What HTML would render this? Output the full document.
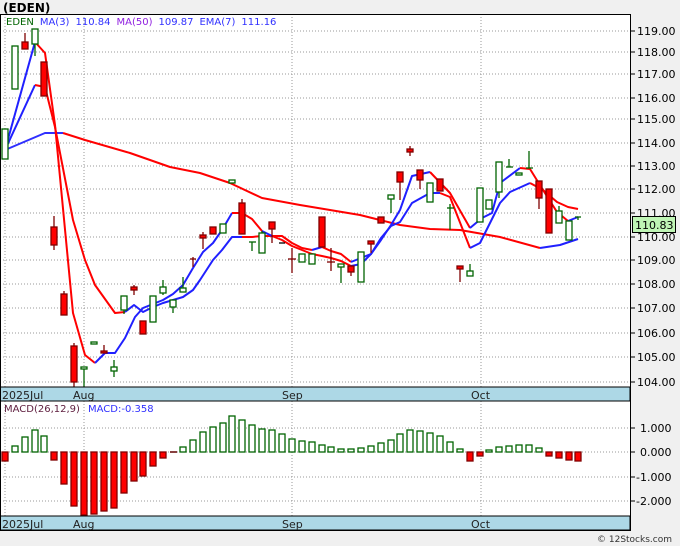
<!DOCTYPE html>
<html><head><meta charset="utf-8"><style>
body{margin:0;background:#f0f0f0;width:680px;height:546px;overflow:hidden;font-family:"DejaVu Sans","Liberation Sans",sans-serif}
svg{position:absolute;left:0;top:0}
</style></head><body>
<svg width="680" height="546" viewBox="0 0 680 546" font-family="DejaVu Sans, Liberation Sans, sans-serif">
<rect x="0" y="0" width="680" height="546" fill="#f0f0f0"/>
<rect x="0" y="14" width="630" height="516" fill="#fff"/>
<text x="3" y="12" font-size="12" font-weight="bold" fill="#000">(EDEN)</text>
<g stroke="#999" stroke-dasharray="1,2" stroke-width="1">
<line x1="0" x2="630" y1="31" y2="31"/><line x1="0" x2="630" y1="52" y2="52"/><line x1="0" x2="630" y1="74" y2="74"/><line x1="0" x2="630" y1="98" y2="98"/><line x1="0" x2="630" y1="119" y2="119"/><line x1="0" x2="630" y1="143" y2="143"/><line x1="0" x2="630" y1="166" y2="166"/><line x1="0" x2="630" y1="189" y2="189"/><line x1="0" x2="630" y1="213" y2="213"/><line x1="0" x2="630" y1="237" y2="237"/><line x1="0" x2="630" y1="260" y2="260"/><line x1="0" x2="630" y1="284" y2="284"/><line x1="0" x2="630" y1="308" y2="308"/><line x1="0" x2="630" y1="333" y2="333"/><line x1="0" x2="630" y1="357" y2="357"/><line x1="0" x2="630" y1="382" y2="382"/>
<line x1="0" x2="630" y1="428" y2="428"/><line x1="0" x2="630" y1="452" y2="452"/><line x1="0" x2="630" y1="477" y2="477"/><line x1="0" x2="630" y1="501" y2="501"/>
<line x1="5" x2="5" y1="14" y2="516"/><line x1="84" x2="84" y1="14" y2="516"/><line x1="292" x2="292" y1="14" y2="516"/><line x1="481" x2="481" y1="14" y2="516"/>
</g>
<text x="6" y="25" font-size="10"><tspan fill="#006400">EDEN</tspan><tspan fill="#3030ff" dx="6">MA(3)</tspan><tspan fill="#3030ff" dx="6">110.84</tspan><tspan fill="#9020e0" dx="6">MA(50)</tspan><tspan fill="#3030ff" dx="6">109.87</tspan><tspan fill="#3030ff" dx="6">EMA(7)</tspan><tspan fill="#3030ff" dx="6">111.16</tspan></text>
<g fill="none" stroke-width="2" stroke-linejoin="round">
<polyline stroke="#3030ff" points="5,150 45,133 63,133"/>
<polyline stroke="#f00" points="63,133 85,140 130,153 170,167 200,173 230,183 262,198 300,205 330,210 360,215 380,220 400,225 430,229 460,230 500,237 540,248"/>
<polyline stroke="#2020ff" points="540,248 560,245 578,239"/>
<polyline stroke="#2020ff" points="5,150 35,85"/>
<polyline stroke="#f00" points="35,85 45,87 55,127 73,220 85,260 95,285 115,313 125,312"/>
<polyline stroke="#2020ff" points="125,312 134,305 143,312 153,307 163,303 173,300 183,297 193,290 200,280 213,260 222,250 232,237 242,237"/>
<polyline stroke="#f00" points="242,237 252,237 262,236 272,236 282,240 292,246 302,250 312,254 322,256 331,258 341,261 351,266"/>
<polyline stroke="#2020ff" points="351,266 361,264 371,254 381,238 391,226 400,222 412,203 430,193 440,193"/>
<polyline stroke="#f00" points="440,193 450,197 470,248"/>
<polyline stroke="#2020ff" points="470,248 480,243 500,203 510,192 530,183"/>
<polyline stroke="#f00" points="530,183 543,190 557,202 568,207 578,209"/>
<polyline stroke="#2020ff" points="5,150 35,42"/>
<polyline stroke="#f00" points="35,42 45,53 55,125 73,313 85,355 95,363"/>
<polyline stroke="#2020ff" points="95,363 105,353 115,353 125,338 135,317 143,308 153,304 163,300 173,294 183,285 193,268 203,252 213,243 222,230 232,213"/>
<polyline stroke="#f00" points="232,213 242,213 252,219 262,231"/>
<polyline stroke="#2020ff" points="262,231 272,236"/>
<polyline stroke="#f00" points="272,236 282,236 292,243 302,248 312,250"/>
<polyline stroke="#2020ff" points="312,250 322,247"/>
<polyline stroke="#f00" points="322,247 331,251 341,254 351,262"/>
<polyline stroke="#2020ff" points="351,262 361,258 371,254 381,240 391,225 400,210 412,176 430,172"/>
<polyline stroke="#f00" points="430,172 450,193 470,228"/>
<polyline stroke="#2020ff" points="470,228 482,218 492,213 500,183 520,168"/>
<polyline stroke="#f00" points="520,168 530,169 543,190 557,212 568,221"/>
<polyline stroke="#2020ff" points="568,221 578,217"/>
</g>
<g stroke-width="1.3">
<g stroke="#006400" fill="#fff">
<rect x="2" y="129" width="6" height="30"/><rect x="12" y="46" width="6" height="43"/><rect x="32" y="29" width="6" height="15"/><line x1="35" x2="35" y1="44" y2="56"/>
<line x1="84" x2="84" y1="368" y2="387"/><rect x="81" y="367" width="6" height="2"/><rect x="91" y="342" width="6" height="2"/>
<line x1="114" x2="114" y1="360" y2="377"/><rect x="111" y="367" width="6" height="4"/>
<line x1="124" x2="124" y1="296" y2="314"/><rect x="121" y="296" width="6" height="14"/>
<rect x="150" y="296" width="6" height="26"/>
<line x1="163" x2="163" y1="280" y2="295"/><rect x="160" y="287" width="6" height="6"/>
<line x1="173" x2="173" y1="300" y2="313"/><rect x="170" y="300" width="6" height="7"/>
<line x1="183" x2="183" y1="277" y2="292"/><rect x="180" y="288" width="6" height="4"/>
<rect x="220" y="224" width="6" height="9"/><rect x="229" y="180" width="6" height="3"/>
<line x1="252" x2="252" y1="242" y2="251"/><line x1="249" x2="256" y1="242" y2="242"/>
<line x1="262" x2="262" y1="231" y2="253"/><rect x="259" y="233" width="6" height="20"/>
<rect x="299" y="254" width="6" height="8"/><rect x="309" y="254" width="6" height="10"/>
<line x1="341" x2="341" y1="264" y2="283"/><rect x="338" y="264" width="6" height="3"/>
<rect x="358" y="252" width="6" height="30"/>
<line x1="391" x2="391" y1="195" y2="213"/><rect x="388" y="195" width="6" height="4"/>
<rect x="427" y="183" width="6" height="19"/>
<line x1="450" x2="450" y1="204" y2="230"/><line x1="447" x2="454" y1="208" y2="208"/>
<line x1="470" x2="470" y1="264" y2="276"/><rect x="467" y="271" width="6" height="5"/>
<rect x="477" y="188" width="6" height="34"/><rect x="486" y="200" width="6" height="9"/>
<line x1="499" x2="499" y1="162" y2="198"/><rect x="496" y="162" width="6" height="30"/>
<line x1="509" x2="509" y1="159" y2="167"/><line x1="506" x2="513" y1="167" y2="167"/>
<rect x="516" y="173" width="6" height="2"/>
<line x1="529" x2="529" y1="151" y2="168"/><line x1="526" x2="533" y1="168" y2="168"/>
<line x1="559" x2="559" y1="206" y2="223"/><rect x="556" y="211" width="6" height="12"/>
<rect x="566" y="221" width="6" height="19"/>
<line x1="578" x2="578" y1="217" y2="220"/><line x1="575" x2="581" y1="217" y2="217"/>
</g>
<g stroke="#800000" fill="#f00">
<line x1="25" x2="25" y1="33" y2="42"/><rect x="22" y="42" width="6" height="7"/>
<rect x="41" y="62" width="6" height="34"/>
<line x1="54" x2="54" y1="216" y2="250"/><rect x="51" y="227" width="6" height="18"/>
<line x1="64" x2="64" y1="291" y2="294"/><rect x="61" y="294" width="6" height="21"/>
<line x1="74" x2="74" y1="343" y2="387"/><rect x="71" y="346" width="6" height="36"/>
<line x1="104" x2="104" y1="345" y2="353"/><rect x="101" y="351" width="6" height="2"/>
<line x1="134" x2="134" y1="285" y2="295"/><rect x="131" y="287" width="6" height="3"/>
<rect x="140" y="321" width="6" height="13"/>
<line x1="193" x2="193" y1="257" y2="267"/><line x1="190" x2="196" y1="259" y2="259"/>
<line x1="203" x2="203" y1="232" y2="249"/><rect x="200" y="235" width="6" height="3"/>
<rect x="210" y="227" width="6" height="7"/>
<line x1="242" x2="242" y1="199" y2="234"/><rect x="239" y="203" width="6" height="31"/>
<line x1="272" x2="272" y1="229" y2="243"/><rect x="269" y="222" width="6" height="7"/>
<line x1="279" x2="285" y1="243" y2="243" stroke="#000"/>
<line x1="292" x2="292" y1="248" y2="273"/><line x1="288" x2="296" y1="259" y2="259"/>
<rect x="319" y="217" width="6" height="30"/>
<line x1="331" x2="331" y1="248" y2="271"/><line x1="327" x2="335" y1="262" y2="262"/>
<line x1="351" x2="351" y1="266" y2="276"/><rect x="348" y="266" width="6" height="6"/>
<line x1="371" x2="371" y1="241" y2="253"/><rect x="368" y="241" width="6" height="3"/>
<rect x="378" y="217" width="6" height="6"/>
<line x1="400" x2="400" y1="172" y2="200"/><rect x="397" y="172" width="6" height="10"/>
<line x1="410" x2="410" y1="146" y2="156"/><rect x="407" y="149" width="6" height="3"/>
<line x1="420" x2="420" y1="170" y2="189"/><rect x="417" y="170" width="6" height="10"/>
<rect x="437" y="179" width="6" height="12"/>
<line x1="460" x2="460" y1="266" y2="282"/><rect x="457" y="266" width="6" height="3"/>
<line x1="539" x2="539" y1="181" y2="209"/><rect x="536" y="181" width="6" height="17"/>
<rect x="546" y="189" width="6" height="44"/>
</g>
</g>
<text x="4" y="412" font-size="10" fill="#602040">MACD(26,12,9)</text>
<text x="88" y="412" font-size="10" fill="#3030ff">MACD:-0.358</text>
<g stroke-width="1.3">
<g stroke="#006400" fill="#fff">
<rect x="12" y="446" width="6" height="6"/><rect x="22" y="437" width="6" height="15"/><rect x="32" y="430" width="6" height="22"/><rect x="41" y="436" width="6" height="16"/>
<rect x="180" y="447" width="6" height="5"/><rect x="190" y="440" width="6" height="12"/><rect x="200" y="432" width="6" height="20"/><rect x="210" y="427" width="6" height="25"/><rect x="220" y="423" width="6" height="29"/><rect x="229" y="416" width="6" height="36"/><rect x="239" y="420" width="6" height="32"/><rect x="249" y="425" width="6" height="27"/><rect x="259" y="429" width="6" height="23"/><rect x="269" y="430" width="6" height="22"/><rect x="279" y="434" width="6" height="18"/><rect x="289" y="439" width="6" height="13"/><rect x="299" y="441" width="6" height="11"/><rect x="309" y="442" width="6" height="10"/><rect x="319" y="445" width="6" height="7"/><rect x="328" y="447" width="6" height="5"/><rect x="338" y="449" width="6" height="3"/><rect x="348" y="449" width="6" height="3"/><rect x="358" y="448" width="6" height="4"/><rect x="368" y="446" width="6" height="6"/><rect x="378" y="443" width="6" height="9"/><rect x="388" y="440" width="6" height="12"/><rect x="397" y="434" width="6" height="18"/><rect x="407" y="430" width="6" height="22"/><rect x="417" y="431" width="6" height="21"/><rect x="427" y="433" width="6" height="19"/><rect x="437" y="436" width="6" height="16"/><rect x="447" y="442" width="6" height="10"/><rect x="457" y="449" width="6" height="3"/>
<rect x="486" y="450" width="6" height="2"/><rect x="496" y="447" width="6" height="5"/><rect x="506" y="446" width="6" height="6"/><rect x="516" y="445" width="6" height="7"/><rect x="526" y="445" width="6" height="7"/><rect x="536" y="448" width="6" height="4"/>
</g>
<g stroke="#800000" fill="#f00">
<rect x="2" y="452" width="6" height="9"/><rect x="51" y="452" width="6" height="8"/><rect x="61" y="452" width="6" height="32"/><rect x="71" y="452" width="6" height="54"/><rect x="81" y="452" width="6" height="63"/><rect x="91" y="452" width="6" height="62"/><rect x="101" y="452" width="6" height="59"/><rect x="111" y="452" width="6" height="56"/><rect x="121" y="452" width="6" height="41"/><rect x="131" y="452" width="6" height="29"/><rect x="140" y="452" width="6" height="24"/><rect x="150" y="452" width="6" height="14"/><rect x="160" y="452" width="6" height="6"/>
<rect x="467" y="452" width="6" height="9"/><rect x="477" y="452" width="6" height="4"/>
<rect x="546" y="452" width="6" height="4"/><rect x="556" y="452" width="6" height="6"/><rect x="566" y="452" width="6" height="8"/><rect x="575" y="452" width="6" height="9"/>
</g>
<line x1="170" x2="177" y1="452" y2="452" stroke="#600000" stroke-width="1.5"/>
</g>
<rect x="0" y="387" width="630" height="14" fill="#add8e6" stroke="#000"/>
<rect x="0" y="516" width="630" height="14" fill="#add8e6" stroke="#000"/>
<g font-size="11" fill="#222">
<text x="2" y="399">2025Jul</text><text x="73" y="399">Aug</text><text x="282" y="399">Sep</text><text x="471" y="399">Oct</text>
<text x="2" y="528">2025Jul</text><text x="73" y="528">Aug</text><text x="282" y="528">Sep</text><text x="471" y="528">Oct</text>
</g>
<line x1="0.5" x2="0.5" y1="14" y2="530" stroke="#000"/>
<line x1="0" x2="630" y1="14.5" y2="14.5" stroke="#000"/>
<line x1="630.5" x2="630.5" y1="14" y2="530" stroke="#000"/>
<line x1="0" x2="631" y1="530.5" y2="530.5" stroke="#000"/>
<g stroke="#000"><line x1="630" x2="635" y1="31" y2="31"/><line x1="630" x2="635" y1="52" y2="52"/><line x1="630" x2="635" y1="74" y2="74"/><line x1="630" x2="635" y1="98" y2="98"/><line x1="630" x2="635" y1="119" y2="119"/><line x1="630" x2="635" y1="143" y2="143"/><line x1="630" x2="635" y1="166" y2="166"/><line x1="630" x2="635" y1="189" y2="189"/><line x1="630" x2="635" y1="213" y2="213"/><line x1="630" x2="635" y1="237" y2="237"/><line x1="630" x2="635" y1="260" y2="260"/><line x1="630" x2="635" y1="284" y2="284"/><line x1="630" x2="635" y1="308" y2="308"/><line x1="630" x2="635" y1="333" y2="333"/><line x1="630" x2="635" y1="357" y2="357"/><line x1="630" x2="635" y1="382" y2="382"/><line x1="630" x2="635" y1="428" y2="428"/><line x1="630" x2="635" y1="452" y2="452"/><line x1="630" x2="635" y1="477" y2="477"/><line x1="630" x2="635" y1="501" y2="501"/></g>
<g font-size="11" fill="#000">
<text x="637" y="35">119.00</text><text x="637" y="56">118.00</text><text x="637" y="78">117.00</text><text x="637" y="102">116.00</text><text x="637" y="123">115.00</text><text x="637" y="147">114.00</text><text x="637" y="170">113.00</text><text x="637" y="193">112.00</text><text x="637" y="217">111.00</text><text x="637" y="241">110.00</text><text x="637" y="264">109.00</text><text x="637" y="288">108.00</text><text x="637" y="312">107.00</text><text x="637" y="337">106.00</text><text x="637" y="361">105.00</text><text x="637" y="386">104.00</text>
<text x="640" y="432">1.000</text><text x="640" y="456">0.000</text><text x="636" y="481">-1.000</text><text x="636" y="505">-2.000</text>
</g>
<rect x="632.5" y="216.5" width="43" height="16" fill="#bff5b5" stroke="#000"/>
<text x="635" y="229" font-size="11" fill="#000">110.83</text>
<text x="597" y="542" font-size="9" fill="#333">© 12Stocks.com</text>
</svg>
</body></html>
